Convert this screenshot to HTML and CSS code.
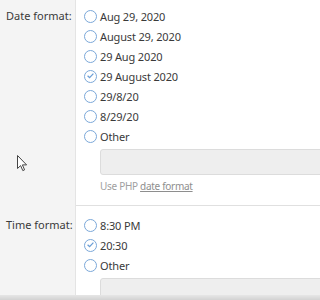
FILE: index.html
```html
<!DOCTYPE html>
<html>
<head>
<meta charset="utf-8">
<link rel="stylesheet" href="styles.css">
</head>
<body>
<div class="form">
  <div class="row">
    <div class="label">Date format:</div>
    <div class="field first">
      <div class="opt"><span class="radio"></span>Aug 29, 2020</div>
      <div class="opt"><span class="radio"></span>August 29, 2020</div>
      <div class="opt"><span class="radio"></span>29 Aug 2020</div>
      <div class="opt"><span class="radio checked"><svg viewBox="0 0 13 13" width="13" height="13"><path d="M3.6 6.7 L5.6 8.6 L9.4 4.6" fill="none" stroke="#6b9ed6" stroke-width="1.3"/></svg></span>29 August 2020</div>
      <div class="opt"><span class="radio"></span>29/8/20</div>
      <div class="opt"><span class="radio"></span>8/29/20</div>
      <div class="opt"><span class="radio"></span>Other</div>
      <div class="input"></div>
      <div class="hint">Use PHP <span class="link">date format</span></div>
    </div>
  </div>
  <div class="row">
    <div class="label">Time format:</div>
    <div class="field second">
      <div class="opt"><span class="radio"></span>8:30 PM</div>
      <div class="opt"><span class="radio checked"><svg viewBox="0 0 13 13" width="13" height="13"><path d="M3.6 6.7 L5.6 8.6 L9.4 4.6" fill="none" stroke="#6b9ed6" stroke-width="1.3"/></svg></span>20:30</div>
      <div class="opt"><span class="radio"></span>Other</div>
      <div class="input"></div>
    </div>
  </div>
</div>
<svg class="cursor" width="12" height="18" viewBox="0 0 12 18"><path d="M0.5 0.5 L0.5 13.5 L3.6 10.6 L5.8 15.6 L7.6 14.8 L5.4 9.9 L9.6 9.9 Z" fill="#fff" stroke="#444" stroke-width="1" stroke-linejoin="round"/></svg>
<div class="bottom-shade"></div>
</body>
</html>
```
FILE: styles.css
```css
html, body {
  margin: 0;
  padding: 0;
  width: 320px;
  height: 300px;
  overflow: hidden;
  background: #fff;
}
body {
  font-family: "Noto Sans", "Open Sans", sans-serif;
  font-size: 11px;
  color: #3a3a3a;
}
.form {
  display: flex;
  flex-direction: column;
  height: 300px;
  overflow: hidden;
}
.row {
  display: grid;
  grid-template-columns: 76px 244px;
  flex: none;
}
.label {
  background: #f4f4f4;
  border-right: 1px solid #e4e4e4;
  padding-left: 6px;
  line-height: 20px;
  white-space: nowrap;
}
.row:first-child .label { padding-top: 6px; }
.row:nth-child(2) .label { padding-top: 10px; }
.field {
  padding-left: 8px;
  overflow: hidden;
}
.field.first {
  padding-top: 6px;
  padding-bottom: 11px;
}
.field.second {
  border-top: 1px solid #e0e0e0;
  padding-top: 9px;
  height: 84px;
}
.opt {
  display: flex;
  align-items: center;
  height: 20px;
  white-space: nowrap;
  letter-spacing: -0.15px;
}
.radio {
  box-sizing: border-box;
  width: 13px;
  height: 13px;
  border: 1.5px solid #7ba8d9;
  border-radius: 50%;
  margin-right: 3px;
  flex: none;
  position: relative;
}
.radio svg {
  position: absolute;
  left: -1.5px;
  top: -1.5px;
}
.input {
  box-sizing: border-box;
  margin: 3px 0 0 16px;
  width: 240px;
  height: 26px;
  background: #eeeeee;
  border: 1px solid #dcdcdc;
  border-radius: 3px;
}
.hint {
  margin: 4px 0 0 16px;
  font-size: 10px;
  line-height: 15px;
  letter-spacing: -0.3px;
  color: #a0a0a0;
  white-space: nowrap;
}
.link {
  text-decoration: underline;
  color: #8e8e8e;
}
.cursor {
  position: absolute;
  left: 17px;
  top: 155px;
}
.bottom-shade {
  position: absolute;
  left: 0;
  right: 0;
  bottom: 0;
  height: 5px;
  background: linear-gradient(#e6e6e6, #d2d2d2);
}
```
